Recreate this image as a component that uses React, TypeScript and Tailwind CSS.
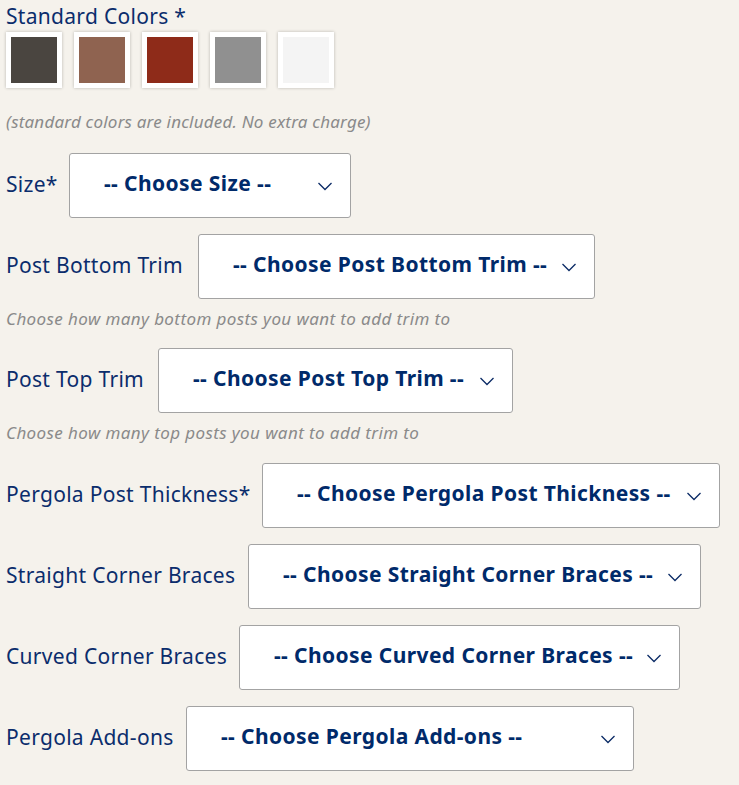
import React from "react";

const swatches = ["#4a4540", "#8f6350", "#8e2b19", "#909090", "#f4f4f4"];

function Chevron() {
  return (
    <svg width="16" height="10" viewBox="0 0 16 10" className="absolute right-[17px] top-1/2 -translate-y-1/2" fill="none">
      <path d="M1.5 2 L8 8.5 L14.5 2" stroke="#0b2b66" strokeWidth="1.3" />
    </svg>
  );
}

function SelectRow({ label, labelW, boxW, text, help, helpCls }: { label: string; labelW: number; boxW: number; text: string; help?: string; helpCls?: string }) {
  return (
    <div className="flex flex-col">
      <div className="flex items-center">
        <span className="text-[21px] tracking-[0.3px] text-[#0b2d6c] shrink-0 whitespace-nowrap -mt-[2px]" style={{ width: labelW }}>{label}</span>
        <div className="relative h-[65px] bg-white border border-[#a3a3a3] rounded-[3px] flex items-center pl-[34px] shrink-0" style={{ width: boxW }}>
          <span className="text-[21px] font-bold tracking-[0.4px] text-[#002a6a] whitespace-nowrap -mt-[3px]">{text}</span>
          <Chevron />
        </div>
      </div>
      {help && <div className={"italic text-[17px] tracking-[0.4px] text-[#8a8a8a] mt-[8px] leading-[24px] " + (helpCls ?? "")}>{help}</div>}
    </div>
  );
}

export default function App() {
  return (
    <div className="min-h-[785px] w-[739px] bg-[#f5f2ec] pl-[6px] pt-[2px]" style={{ fontFamily: '"Noto Sans", "Open Sans", sans-serif' }}>
      <div className="text-[21px] tracking-[0.3px] text-[#0b2d6c] leading-[28px]">Standard Colors *</div>
      <div className="flex gap-[12px] mt-[2px]">
        {swatches.map((c) => (
          <div key={c} className="w-[56px] h-[56px] bg-white p-[5px] shadow-[0_0_3px_rgba(0,0,0,0.25)]">
            <div className="w-full h-full" style={{ backgroundColor: c }} />
          </div>
        ))}
      </div>
      <div className="italic text-[17px] tracking-[0.2px] text-[#8a8a8a] mt-[22px] leading-[24px]">(standard colors are included. No extra charge)</div>
      <div className="flex flex-col gap-[16px] mt-[19px]">
        <SelectRow label="Size*" labelW={63} boxW={282} text="-- Choose Size --" />
        <SelectRow label="Post Bottom Trim" labelW={192} boxW={397} text="-- Choose Post Bottom Trim --" help="Choose how many bottom posts you want to add trim to" helpCls="mb-[1px]" />
        <SelectRow label="Post Top Trim" labelW={152} boxW={355} text="-- Choose Post Top Trim --" help="Choose how many top posts you want to add trim to" helpCls="mb-[2px]" />
        <SelectRow label="Pergola Post Thickness*" labelW={256} boxW={458} text="-- Choose Pergola Post Thickness --" />
        <SelectRow label="Straight Corner Braces" labelW={242} boxW={453} text="-- Choose Straight Corner Braces --" />
        <SelectRow label="Curved Corner Braces" labelW={233} boxW={441} text="-- Choose Curved Corner Braces --" />
        <SelectRow label="Pergola Add-ons" labelW={180} boxW={448} text="-- Choose Pergola Add-ons --" />
      </div>
    </div>
  );
}
